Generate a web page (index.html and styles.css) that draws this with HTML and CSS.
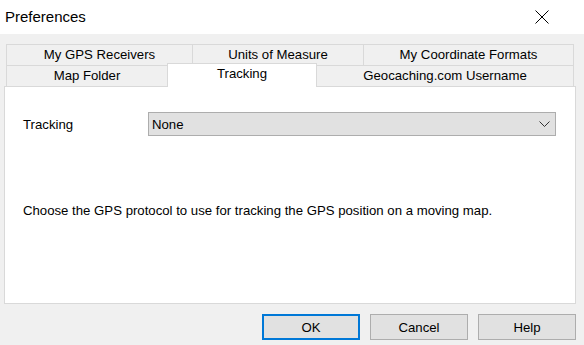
FILE: index.html
```html
<!DOCTYPE html>
<html lang="en">
<head>
    <meta charset="UTF-8">
    <title>Preferences</title>
    <link rel="stylesheet" href="styles.css">
</head>
<body>
    <div class="titlebar">
        <span class="title">Preferences</span>
        <svg class="close" width="14" height="14" viewBox="0 0 14 14">
            <path d="M0.5 0.5 L13.5 13.5 M13.5 0.5 L0.5 13.5" stroke="#000" stroke-width="1" fill="none"/>
        </svg>
    </div>

    <div class="content">
        <div class="tabstrip">
            <div class="tabrow">
                <div class="tab w-gps">My GPS Receivers</div>
                <div class="tab w-units">Units of Measure</div>
                <div class="tab w-coord">My Coordinate Formats</div>
            </div>
            <div class="tabrow">
                <div class="tab w-folder">Map Folder</div>
                <div class="tab w-track active">Tracking</div>
                <div class="tab w-geo">Geocaching.com Username</div>
            </div>
        </div>

        <div class="panel">
            <div class="field">
                <label for="tracking">Tracking</label>
                <div class="combo" id="tracking">
                    <span>None</span>
                    <svg width="11" height="6" viewBox="0 0 11 6">
                        <path d="M0.5 0.5 L5.5 5.5 L10.5 0.5" stroke="#333" stroke-width="1" fill="none"/>
                    </svg>
                </div>
            </div>
            <p class="hint">Choose the GPS protocol to use for tracking the GPS position on a moving map.</p>
        </div>

        <div class="buttons">
            <button class="default">OK</button>
            <button>Cancel</button>
            <button>Help</button>
        </div>
    </div>
</body>
</html>
```

FILE: styles.css
```css
body {
    margin: 0;
    width: 584px;
    height: 345px;
    background-color: #f0f0f0;
    font-family: "Liberation Sans", Arial, sans-serif;
    font-size: 13.2px;
    color: #000;
    overflow: hidden;
}

.titlebar {
    height: 34px;
    background-color: #fff;
    display: flex;
    align-items: center;
    justify-content: space-between;
    padding: 0 35px 0 5px;
}

.title {
    font-size: 15px;
    margin-top: -2px;
}

.content {
    padding: 10px 8px 0 4px;
}

.tabstrip {
    padding: 0 1px 0 2px;
}

.tabrow {
    display: flex;
    height: 21px;
}

.tab {
    box-sizing: border-box;
    border: 1px solid #d9d9d9;
    border-bottom: none;
    background-color: #f0f0f0;
    text-align: center;
    line-height: 20px;
    margin-left: -1px;
}

.tab:first-child {
    margin-left: 0;
}

.tab.active {
    position: relative;
    z-index: 1;
    background-color: #fff;
    margin-top: -2px;
    height: 24px;
    line-height: 20px;
}

.w-gps { width: 187px; }
.w-units { width: 172px; }
.w-coord { width: 211px; }
.w-folder { width: 162px; }
.w-track { width: 150px; }
.w-geo { width: 258px; }

.panel {
    box-sizing: border-box;
    height: 218px;
    background-color: #fff;
    border: 1px solid #d9d9d9;
    padding: 25px 19px 0 18px;
}

.field {
    display: flex;
    align-items: center;
}

.field label {
    width: 125px;
}

.combo {
    box-sizing: border-box;
    flex: 1;
    height: 24px;
    background-color: #e1e1e1;
    border: 1px solid #adadad;
    display: flex;
    align-items: center;
    justify-content: space-between;
    padding: 0 5px 0 3px;
}

.hint {
    margin: 67px 0 0 0;
}

.buttons {
    display: flex;
    justify-content: flex-end;
    gap: 10px;
    padding: 10px 0 0 0;
}

button {
    box-sizing: border-box;
    width: 98px;
    height: 26px;
    background-color: #e1e1e1;
    border: 1px solid #adadad;
    font-family: inherit;
    font-size: 13.2px;
    color: #000;
    padding: 0;
}

button.default {
    border: 2px solid #0078d7;
}
```
